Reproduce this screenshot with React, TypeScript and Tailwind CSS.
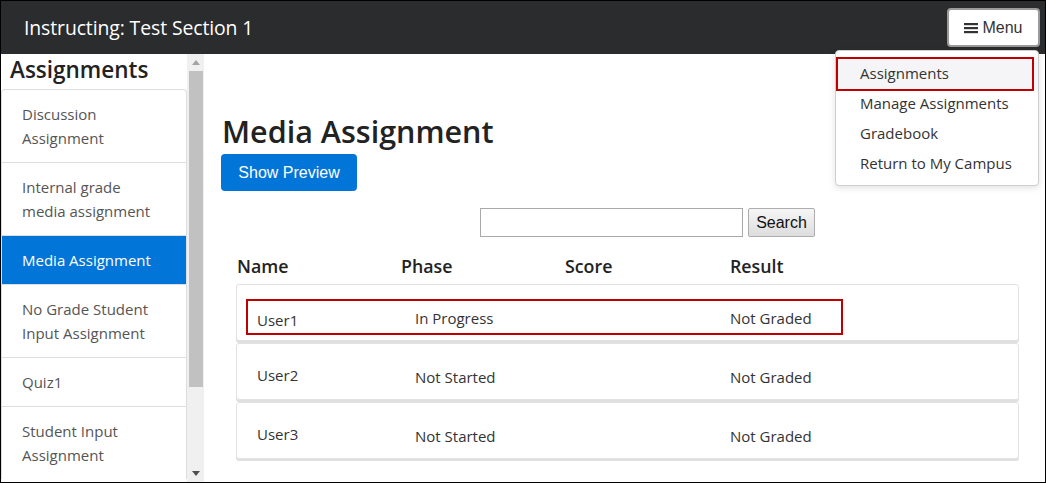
import React from "react";

const items: { label: string[]; active?: boolean }[] = [
  { label: ["Discussion", "Assignment"] },
  { label: ["Internal grade", "media assignment"] },
  { label: ["Media Assignment"], active: true },
  { label: ["No Grade Student", "Input Assignment"] },
  { label: ["Quiz1"] },
  { label: ["Student Input", "Assignment"] },
];

const rows = [
  { name: "User1", phase: "In Progress", result: "Not Graded", hl: true },
  { name: "User2", phase: "Not Started", result: "Not Graded" },
  { name: "User3", phase: "Not Started", result: "Not Graded" },
];

export default function App() {
  return (
    <div className="relative w-[1046px] h-[483px] border border-black bg-white overflow-hidden flex flex-col font-['Open_Sans',sans-serif] text-[#333]">
      {/* Header */}
      <div className="h-[53px] shrink-0 bg-[#2b2c2e] flex items-center justify-between pl-[23px] pr-[5px]">
        <div className="text-white text-[19.4px] tracking-[-0.1px]">Instructing: Test Section 1</div>
        <button className="w-[93px] h-[39px] bg-white border-2 border-[#9a9a9a] rounded-[4px] flex items-center justify-center gap-[4px] font-['Liberation_Sans',sans-serif] text-[16px] text-[#333]">
          <svg width="14" height="12" viewBox="0 0 14 12">
            <rect x="0" y="1" width="14" height="2.2" fill="#333" />
            <rect x="0" y="5" width="14" height="2.2" fill="#333" />
            <rect x="0" y="9" width="14" height="2.2" fill="#333" />
          </svg>
          <span>Menu</span>
        </button>
      </div>

      {/* Body */}
      <div className="flex flex-1 min-h-0">
        {/* Sidebar */}
        <div className="w-[203px] shrink-0 flex">
          <div className="w-[186px] shrink-0 flex flex-col">
            <div className="h-[35px] pl-[9px] text-[22.5px] leading-[32px] text-[#222] font-semibold">Assignments</div>
            <div className="border border-[#ddd] rounded-t-[4px] border-b-0">
              {items.map((it, i) => (
                <div
                  key={i}
                  className={
                    (i > 0 ? "border-t border-[#ddd] " : "") +
                    (it.active ? "bg-[#0275d8] text-white " : "text-[#555] ") +
                    "pl-[20px] py-[12px] text-[15px] leading-[24px]"
                  }
                >
                  {it.label.map((l, j) => (
                    <div key={j}>{l}</div>
                  ))}
                </div>
              ))}
            </div>
          </div>
          {/* Scrollbar */}
          <div className="w-[17px] bg-[#f0f0f0] flex flex-col items-center">
            <div className="h-[17px] flex items-center justify-center">
              <svg width="8" height="5" viewBox="0 0 8 5"><path d="M0 5 L4 0 L8 5 Z" fill="#a3a3a3" /></svg>
            </div>
            <div className="w-[14px] h-[316px] bg-[#c1c1c1] ml-[1px]" />
            <div className="flex-1" />
            <div className="h-[17px] flex items-center justify-center">
              <svg width="8" height="5" viewBox="0 0 8 5"><path d="M0 0 L4 5 L8 0 Z" fill="#505050" /></svg>
            </div>
          </div>
        </div>

        {/* Main */}
        <div className="flex-1 pl-[17px] pr-[26px] pt-[59px] flex flex-col">
          <h1 className="text-[30.5px] leading-[36px] font-semibold text-[#222] pl-[1px]">Media Assignment</h1>
          <div className="mt-[5px]">
            <button className="w-[136px] h-[37px] bg-[#0275d8] rounded-[4px] text-white font-['Liberation_Sans',sans-serif] text-[16px]">
              Show Preview
            </button>
          </div>
          <div className="mt-[17px] flex gap-[5px] pl-[259px]">
            <div className="w-[263px] h-[29px] border border-[#a9a9a9] bg-white" />
            <button className="w-[67px] h-[29px] border border-[#adadad] rounded-[2px] bg-gradient-to-b from-[#f6f6f6] to-[#dddddd] font-['Liberation_Sans',sans-serif] text-[16px] text-[#111]">
              Search
            </button>
          </div>
          <div className="mt-[16px] ml-[15px] grid grid-cols-[164px_164px_165px_1fr] pl-[1px] text-[17.8px] leading-[26px] font-semibold text-[#222]">
            <div>Name</div>
            <div>Phase</div>
            <div>Score</div>
            <div>Result</div>
          </div>
          <div className="mt-[5px] ml-[15px] flex flex-col gap-[2px]">
            {rows.map((r, i) => (
              <div
                key={i}
                className="relative h-[57px] border border-[#e2e2e2] rounded-[3px] shadow-[0_2px_0_#e0e0e0] bg-white grid grid-cols-[178px_315px_1fr] items-start text-[15px] leading-[22px]"
              >
                <div className={"pl-[20px] " + (i === 0 ? "pt-[24px]" : "pt-[20px]")}>{r.name}</div>
                <div className={i === 0 ? "pt-[22px]" : "pt-[22px]"}>{r.phase}</div>
                <div className={i === 0 ? "pt-[22px]" : "pt-[22px]"}>{r.result}</div>
                {r.hl && (
                  <div className="absolute left-[9px] top-[14px] w-[597px] h-[36px] border-2 border-[#c00000]" />
                )}
              </div>
            ))}
          </div>
        </div>
      </div>

      {/* Dropdown */}
      <div className="absolute left-[834px] top-[49px] w-[204px] h-[136px] bg-white border border-[#cfcfcf] rounded-[4px] shadow-[0_2px_6px_rgba(0,0,0,0.12)] pt-[6px] text-[15px] text-[#333]">
        <div className="relative h-[33px] bg-[#f5f5f7] pl-[24px] leading-[33px]">
          Assignments
          <div className="absolute left-0 top-0 w-[198px] h-[34px] border-2 border-[#c00000]" />
        </div>
        <div className="h-[30px] pl-[24px] leading-[30px] mt-[-2px]">Manage Assignments</div>
        <div className="h-[30px] pl-[24px] leading-[30px]">Gradebook</div>
        <div className="h-[30px] pl-[24px] leading-[30px]">Return to My Campus</div>
      </div>
    </div>
  );
}
